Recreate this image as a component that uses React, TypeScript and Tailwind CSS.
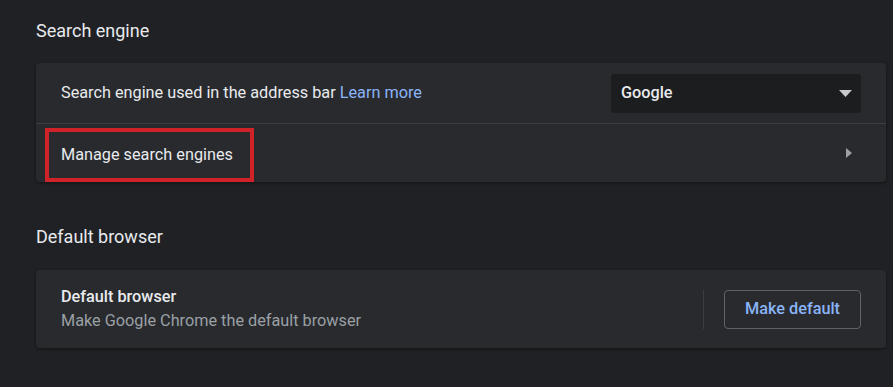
export default function App() {
  return (
    <div
      className="h-[387px] w-[893px] overflow-hidden bg-[#202124] pt-[19px] text-[#e8eaed]"
      style={{ fontFamily: "Roboto, 'Noto Sans', sans-serif" }}
    >
      <div className="ml-[36px] w-[850px]">
        <h2 className="h-[24px] text-[18px] font-normal leading-[24px] text-[#e8eaed]">
          Search engine
        </h2>
        <div className="mt-[20px] rounded-[4px] bg-[#292a2d] shadow-[0_1px_3px_rgba(0,0,0,0.45)]">
          <div className="flex h-[60px] items-center justify-between pl-[25px] pr-[25px]">
            <div className="text-[16.25px]">
              Search engine used in the address bar{" "}
              <a className="text-[#8ab4f8]">Learn more</a>
            </div>
            <div className="flex h-[39px] w-[250px] items-center justify-between rounded-[4px] bg-[#1c1d1f] pl-[10px] pr-[9px]">
              <span className="text-[16.25px] font-medium">Google</span>
              <svg width="13" height="7" viewBox="0 0 13 7">
                <path d="M0 0h13L6.5 7z" fill="#c8cacd" />
              </svg>
            </div>
          </div>
          <div className="flex h-[59px] items-center justify-between border-t border-[#3c3d40] pl-[9px] pr-[34px]">
            <div className="mt-[4px] flex h-[54px] w-[209px] items-center border-[4px] border-[#cf2329] pl-[12px] text-[16.25px]">
              Manage search engines
            </div>
            <svg width="6" height="10" viewBox="0 0 6 10">
              <path d="M0 0l6 5-6 5z" fill="#9aa0a6" />
            </svg>
          </div>
        </div>

        <h2 className="mt-[43px] h-[24px] text-[18px] font-normal leading-[24px] text-[#e8eaed]">
          Default browser
        </h2>
        <div className="mt-[21px] flex h-[78px] items-center justify-between rounded-[4px] bg-[#292a2d] pl-[25px] pr-[25px] shadow-[0_1px_3px_rgba(0,0,0,0.45)]">
          <div className="flex flex-col">
            <span className="text-[16.25px] font-medium leading-[24px]">Default browser</span>
            <span className="text-[16.25px] leading-[24px] text-[#9aa0a6]">
              Make Google Chrome the default browser
            </span>
          </div>
          <div className="flex items-center">
            <div className="h-[39px] w-px bg-[#3c3d40]" />
            <button className="ml-[20px] h-[39px] w-[137px] rounded-[4px] border border-[#5f6368] text-[16.25px] font-medium text-[#8ab4f8]">
              Make default
            </button>
          </div>
        </div>
      </div>
    </div>
  );
}
